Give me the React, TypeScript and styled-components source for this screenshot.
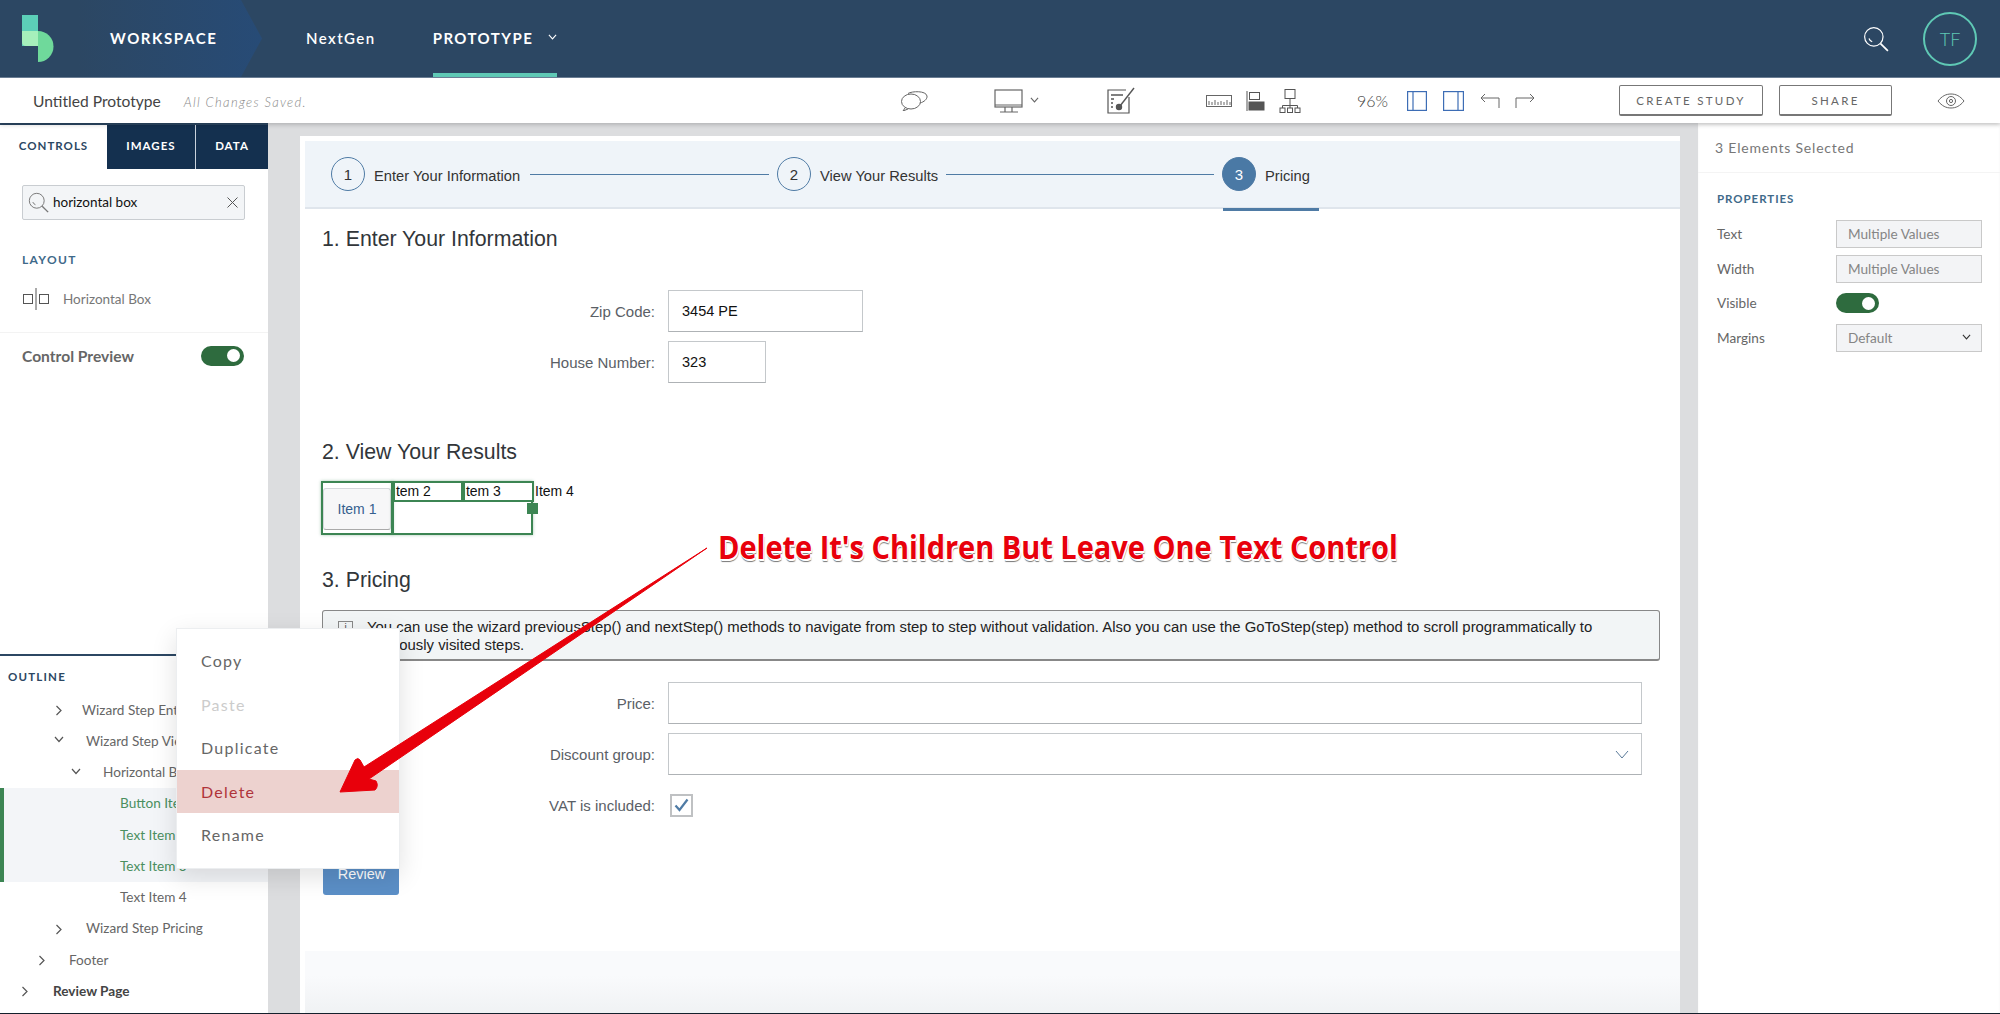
import React from 'react';
import styled, { createGlobalStyle } from 'styled-components';

const GlobalStyle = createGlobalStyle`
  html, body {
    margin: 0;
    padding: 0;
    background: #fff;
  }
  * {
    box-sizing: border-box;
  }
`;

const Page = styled.div`
  position: relative;
  width: 2000px;
  height: 1014px;
  overflow: hidden;
  display: flex;
  flex-direction: column;
  font-family: Lato, 'Liberation Sans', sans-serif;
  border-bottom: 1px solid #14202c;
`;

const Header = styled.header`
  height: 78px;
  flex: none;
  display: flex;
  align-items: center;
  background: #2c4763;
  color: #fff;
  border-bottom: 1px solid #6d8096;
`;

const Brand = styled.div`
  width: 262px;
  height: 77px;
  flex: none;
  display: flex;
  align-items: center;
  padding-left: 22px;
  background: linear-gradient(90deg, #2c4763 0%, #2c4763 30%, #274b76 100%);
  clip-path: polygon(0 0, 241px 0, 262px 50%, 241px 100%, 0 100%);
`;

const BrandName = styled.span`
  margin: 0 0 2px 56px;
  font-size: 15px;
  font-weight: 700;
  letter-spacing: 1.6px;
`;

const NavItem = styled.div<{ $active?: boolean; $gap: number }>`
  height: 77px;
  margin-left: ${(p) => p.$gap}px;
  display: flex;
  align-items: center;
  gap: 15px;
  font-size: 15px;
  font-weight: ${(p) => (p.$active ? 700 : 600)};
  letter-spacing: 1.45px;
  border-bottom: 4px solid ${(p) => (p.$active ? '#5fc9b5' : 'transparent')};
  padding-top: 2px;
`;

const HeaderRight = styled.div`
  margin-left: auto;
  margin-right: 23px;
  display: flex;
  align-items: center;
  gap: 34px;
`;

const Avatar = styled.div`
  width: 54px;
  height: 54px;
  border: 2px solid #5fc9b5;
  border-radius: 50%;
  display: flex;
  align-items: center;
  justify-content: center;
  color: #5fc9b5;
  font-size: 18px;
  font-weight: 300;
`;

const Toolbar = styled.div`
  height: 45px;
  flex: none;
  display: flex;
  align-items: center;
  background: #fff;
  color: #555;
  position: relative;
  z-index: 2;
  box-shadow: 0 2px 4px rgba(0, 0, 0, 0.18);
`;

const TitleGroup = styled.div`
  width: 900px;
  flex: none;
  padding-left: 33px;
  display: flex;
  align-items: baseline;
  gap: 23px;
`;

const DocTitle = styled.span`
  font-size: 15.6px;
  color: #444;
`;

const SavedNote = styled.span`
  font-size: 13px;
  font-style: italic;
  font-weight: 300;
  letter-spacing: 1.3px;
  color: #888;
`;

const Tool = styled.span<{ $gap?: number }>`
  margin-left: ${(p) => p.$gap ?? 0}px;
  display: flex;
  align-items: center;
  flex: none;
`;

const Zoom = styled(Tool)`
  width: 32px;
  font-size: 16px;
  font-weight: 300;
  color: #444;
`;

const OutlineButton = styled.button<{ $gap: number; $width: number }>`
  margin-left: ${(p) => p.$gap}px;
  width: ${(p) => p.$width}px;
  height: 31px;
  flex: none;
  background: #fff;
  border: 1px solid #777;
  border-bottom-width: 2px;
  border-radius: 2px;
  font-family: inherit;
  font-size: 11.5px;
  letter-spacing: 2.3px;
  color: #666;
  padding: 0;
`;

const Body = styled.div`
  flex: 1;
  min-height: 0;
  display: flex;
  background: #dcdddf;
`;

const LeftPanel = styled.aside`
  width: 268px;
  flex: none;
  display: flex;
  flex-direction: column;
  background: #fff;
  border-top: 2px solid #2c4763;
`;

const Tabs = styled.div`
  display: flex;
  height: 44px;
  flex: none;
`;

const Tab = styled.div<{ $active?: boolean; $width: number; $divided?: boolean }>`
  width: ${(p) => p.$width}px;
  display: flex;
  align-items: center;
  justify-content: center;
  background: ${(p) => (p.$active ? '#fff' : '#14304f')};
  color: ${(p) => (p.$active ? '#2c4763' : '#fff')};
  border-left: ${(p) => (p.$divided ? '1px solid #c9d2dc' : 'none')};
  font-size: 11.5px;
  font-weight: 700;
  letter-spacing: 1px;
  padding-bottom: 3px;
`;

const SearchBox = styled.div`
  margin: 16px 23px 0 22px;
  height: 35px;
  display: flex;
  align-items: center;
  padding: 0 6px 0 5px;
  gap: 4px;
  background: #f3f5f7;
  border: 1px solid #c9cdd1;
  border-radius: 2px;
  font-size: 13.5px;
  color: #111;
`;

const SearchText = styled.span`
  flex: 1;
  margin-top: -2px;
`;

const GroupLabel = styled.div`
  margin: 32px 0 0 22px;
  font-size: 12px;
  font-weight: 700;
  letter-spacing: 1.35px;
  color: #3f6a8a;
  line-height: 16px;
`;

const ControlRow = styled.div`
  margin: 20px 0 0 23px;
  height: 22px;
  display: flex;
  align-items: center;
  gap: 14px;
  font-size: 13.5px;
  color: #777;
`;

const PreviewRow = styled.div`
  margin-top: 22px;
  height: 46px;
  border-top: 1px solid #f3f3f3;
  padding: 0 24px 0 22px;
  display: flex;
  align-items: center;
  justify-content: space-between;
  font-size: 15.6px;
  font-weight: 700;
  color: #666;
`;

const Toggle = styled.div`
  width: 43px;
  height: 20px;
  border-radius: 10px;
  background: #2e6b3e;
  display: flex;
  align-items: center;
  justify-content: flex-end;
  padding-right: 4px;

  &::after {
    content: '';
    width: 13px;
    height: 13px;
    border-radius: 50%;
    background: #fff;
  }
`;

const Outline = styled.section`
  margin-top: auto;
  height: 359px;
  flex: none;
  border-top: 2px solid #2c4763;
`;

const OutlineTitle = styled.div`
  height: 38px;
  padding: 13px 0 0 8px;
  font-size: 11.5px;
  font-weight: 700;
  letter-spacing: 1.2px;
  color: #2c4763;
  line-height: 16px;
`;

const TreeRow = styled.div<{ $selected?: boolean; $chevronAt?: number; $textAt: number; $bold?: boolean }>`
  position: relative;
  height: 31.25px;
  display: flex;
  align-items: center;
  padding-left: ${(p) => p.$textAt}px;
  font-size: 13.6px;
  font-weight: ${(p) => (p.$bold ? 700 : 400)};
  color: ${(p) => (p.$selected ? '#4a8f5f' : p.$bold ? '#444' : '#666')};
  background: ${(p) => (p.$selected ? '#f3f5f8' : 'transparent')};
  box-shadow: ${(p) => (p.$selected ? 'inset 4px 0 0 #3c8553' : 'none')};

  svg {
    position: absolute;
    left: ${(p) => p.$chevronAt ?? 0}px;
    top: 11px;
  }
`;

const Workspace = styled.main`
  flex: 1;
  min-width: 0;
  padding: 13px 18px 0 32px;
  display: flex;
`;

const Canvas = styled.div`
  flex: 1;
  display: flex;
  flex-direction: column;
  padding-top: 5px;
  background: #fff;
  font-family: 'Liberation Sans', Arial, sans-serif;
  color: #222;
`;

const Stepper = styled.div`
  position: relative;
  height: 68px;
  flex: none;
  margin-left: 5px;
  display: flex;
  align-items: center;
  padding-left: 26px;
  background: #eff4f9;
  border-bottom: 2px solid #dfe5ec;
`;

const StepCircle = styled.span<{ $active?: boolean }>`
  width: 34px;
  height: 34px;
  flex: none;
  border-radius: 50%;
  border: 1px solid #4f7ba5;
  background: ${(p) => (p.$active ? '#4a79a5' : 'transparent')};
  color: ${(p) => (p.$active ? '#fff' : '#333')};
  display: flex;
  align-items: center;
  justify-content: center;
  font-size: 15px;
`;

const StepLabel = styled.span<{ $width: number }>`
  width: ${(p) => p.$width}px;
  margin: 3px 0 0 9px;
  font-size: 14.7px;
  color: #333;
  white-space: nowrap;
`;

const StepLine = styled.span<{ $width: number }>`
  width: ${(p) => p.$width}px;
  height: 1px;
  margin: 0 8px 0 9px;
  background: #4f7ba5;
  flex: none;
`;

const StepMark = styled.span`
  position: absolute;
  left: 918px;
  bottom: -4px;
  width: 96px;
  height: 3px;
  background: #4f7ba5;
`;

const Content = styled.div`
  flex: 1;
  min-height: 0;
  display: flex;
  flex-direction: column;
  padding-left: 22px;
`;

const Heading = styled.h2<{ $top: number }>`
  margin: ${(p) => p.$top}px 0 0;
  font-size: 21.3px;
  font-weight: 400;
  line-height: 30px;
  color: #32363a;
`;

const Form = styled.div<{ $top: number }>`
  margin-top: ${(p) => p.$top}px;
  display: grid;
  grid-template-columns: 333px 1fr;
  grid-auto-rows: 42px;
  column-gap: 13px;
  row-gap: 9px;
  align-items: center;
  padding-right: 38px;
`;

const Label = styled.label`
  text-align: right;
  font-size: 15px;
  color: #5a6066;
`;

const Field = styled.div<{ $width?: number }>`
  width: ${(p) => (p.$width ? `${p.$width}px` : '100%')};
  height: 42px;
  padding: 0 12px 0 13px;
  display: flex;
  align-items: center;
  justify-content: space-between;
  border: 1px solid #c4c8cb;
  border-bottom-color: #aeb2b5;
  background: #fff;
  font-size: 14.5px;
  color: #111;
`;

const ResultRow = styled.div`
  margin: 14px 0 0 -1px;
  display: flex;
  align-items: flex-start;
  font-size: 14px;
  color: #111;
  line-height: 18px;
`;

const SelectedItem = styled.div`
  width: 72px;
  height: 54px;
  flex: none;
  border: 2px solid #3c8553;
  box-shadow: 0 0 3px rgba(60, 133, 83, 0.45);
  display: flex;
  align-items: center;
  justify-content: center;
`;

const ItemButton = styled.div`
  width: 68px;
  height: 42px;
  margin-top: 1px;
  border: 1px solid #d5d8db;
  border-bottom-color: #aaa;
  border-radius: 3px;
  background: #f7f7f8;
  color: #35608f;
  font-size: 14px;
  display: flex;
  align-items: center;
  justify-content: center;
`;

const ItemStack = styled.div`
  position: relative;
  width: 141px;
  height: 54px;
  margin-left: -1px;
  flex: none;
  border: 2px solid #3c8553;
  box-shadow: 0 0 3px rgba(60, 133, 83, 0.45);
`;

const ItemCells = styled.div`
  display: flex;
  height: 19px;
  margin: -2px -2px 0;
`;

const ItemCell = styled.div<{ $width: number }>`
  width: ${(p) => p.$width}px;
  height: 21px;
  margin-right: -1px;
  border: 2px solid #3c8553;
  border-left-width: 3px;
  background: #fff;
  line-height: 17px;
  overflow: hidden;
  white-space: nowrap;
  text-indent: -3px;
`;

const ResizeHandle = styled.span`
  position: absolute;
  right: -7px;
  top: 20px;
  width: 11px;
  height: 11px;
  background: #3c8553;
`;

const LooseItem = styled.span`
  margin-left: 2px;
  line-height: 21px;
`;

const InfoBar = styled.div`
  margin: 15px 20px 0 0;
  height: 51px;
  flex: none;
  display: flex;
  padding: 7px 0 0 15px;
  gap: 14px;
  background: #f2f5f6;
  border: 1px solid #888;
  border-bottom-width: 2px;
  border-radius: 3px;
  font-size: 14.9px;
  line-height: 18px;
  color: #222;
`;

const InfoIcon = styled.span`
  width: 15px;
  height: 14px;
  margin-top: 3px;
  flex: none;
  border: 1px solid #888;
  display: flex;
  align-items: center;
  justify-content: center;
  font-size: 10px;
  line-height: 10px;
  color: #555;
`;

const Checkbox = styled.span`
  width: 23px;
  height: 23px;
  margin-left: 2px;
  border: 2px solid #bfc1c3;
  background: #fff;
  display: flex;
  align-items: center;
  justify-content: center;
`;

const ReviewButton = styled.button`
  width: 76px;
  height: 42px;
  margin: 27px 0 0 1px;
  flex: none;
  padding: 0 0 0 1px;
  background: #5b8fc7;
  color: #fff;
  border: none;
  border-radius: 3px;
  font-family: inherit;
  font-size: 14.5px;
`;

const FooterBand = styled.div`
  flex: 1;
  margin: 56px 0 0 -17px;
  background: linear-gradient(180deg, #f9fafc 0%, #f9fafc 40%, #f0f2f4 100%);
`;

const RightPanel = styled.aside`
  width: 302px;
  flex: none;
  background: #fff;
  box-shadow: inset 0 2px 3px rgba(0, 0, 0, 0.05);
`;

const SelectionTitle = styled.div`
  height: 50px;
  padding: 17px 0 0 17px;
  border-bottom: 1px solid #f4f4f4;
  font-size: 14px;
  line-height: 16px;
  letter-spacing: 0.8px;
  color: #777;
`;

const PropertiesTitle = styled.div`
  margin: 18px 0 0 19px;
  font-size: 11.5px;
  font-weight: 700;
  line-height: 16px;
  letter-spacing: 0.95px;
  color: #3f6a8a;
`;

const PropRows = styled.div`
  margin: 13px 18px 0 19px;
  display: grid;
  grid-template-columns: 119px 1fr;
  grid-auto-rows: 28px;
  row-gap: 6.5px;
  align-items: center;
  font-size: 13.6px;
  color: #666;
`;

const PropInput = styled.div`
  height: 28px;
  padding: 0 10px 0 11px;
  display: flex;
  align-items: center;
  justify-content: space-between;
  background: #f3f4f6;
  border: 1px solid #c9c9c9;
  font-size: 13.6px;
  color: #858585;
`;

const ContextMenu = styled.div`
  position: absolute;
  left: 176px;
  top: 628px;
  width: 224px;
  height: 241px;
  padding-top: 10px;
  background: #fff;
  border: 1px solid #eceef0;
  box-shadow: 0 8px 24px rgba(0, 0, 0, 0.12);
  z-index: 5;
`;

const MenuItem = styled.div<{ $tone?: 'muted' | 'danger' }>`
  height: 43.5px;
  padding-left: 24px;
  display: flex;
  align-items: center;
  font-size: 16px;
  letter-spacing: 1.25px;
  color: ${(p) => (p.$tone === 'muted' ? '#ccc' : p.$tone === 'danger' ? '#b0343a' : '#666')};
  background: ${(p) => (p.$tone === 'danger' ? '#edd2cf' : 'transparent')};
`;

const ArrowLayer = styled.svg`
  position: absolute;
  left: 0;
  top: 0;
  z-index: 6;
  pointer-events: none;
`;

const Annotation = styled.div`
  position: absolute;
  left: 718px;
  top: 524px;
  z-index: 6;
  font-family: 'Open Sans', 'Noto Sans', sans-serif;
  font-size: 32px;
  font-weight: 700;
  line-height: 46px;
  color: #e8000b;
  white-space: nowrap;
  transform: scaleX(0.905);
  transform-origin: left center;
  text-shadow: 1px 0 0 #fff, -1px 0 0 #fff, 0 -1px 0 #fff, 0 1px 0 #fff, 1px 2px 0 #fff, 1px 3px 1px #777;
`;

const ChevronRight = () => (
  <svg width="8" height="11" viewBox="0 0 8 11" fill="none" stroke="#555" strokeWidth="1.2">
    <path d="M1.5 1l4.5 4.5L1.5 10" />
  </svg>
);

const ChevronDown = ({ color = '#555', size = 10 }: { color?: string; size?: number }) => (
  <svg width={size} height={size * 0.7} viewBox="0 0 10 7" fill="none" stroke={color} strokeWidth="1.2">
    <path d="M1 1l4 4.5L9 1" />
  </svg>
);

const Logo = () => (
  <svg width="32" height="48" viewBox="0 0 32 48">
    <rect x="0" y="0" width="16" height="31" fill="#5ccfb8" />
    <path d="M16 16a15.5 15.5 0 0 1 0 31z" fill="#6fd99b" />
    <path d="M0 16h16v15H4a4 4 0 0 1-4-4z" fill="#a6efbb" />
  </svg>
);

const SearchGlyph = ({ size, color }: { size: number; color: string }) => (
  <svg width={size} height={size} viewBox="0 0 24 24" fill="none" stroke={color} strokeWidth="1.1">
    <circle cx="10" cy="10" r="8.5" />
    <path d="M16.2 16.2L23 23" strokeWidth="1.6" />
    <path d="M5.5 11.5a5 5 0 0 0 3 3" />
  </svg>
);

const steps = [
  { n: 1, label: 'Enter Your Information', width: 147, line: 239 },
  { n: 2, label: 'View Your Results', width: 117, line: 268 },
  { n: 3, label: 'Pricing', width: 50, active: true },
];

const outline = [
  { text: 'Wizard Step Entry', at: 82, chevron: 'right', chevronAt: 55 },
  { text: 'Wizard Step View', at: 86, chevron: 'down', chevronAt: 54 },
  { text: 'Horizontal Box', at: 103, chevron: 'down', chevronAt: 71 },
  { text: 'Button Item 1', at: 120, selected: true },
  { text: 'Text Item 2', at: 120, selected: true },
  { text: 'Text Item 3', at: 120, selected: true },
  { text: 'Text Item 4', at: 120 },
  { text: 'Wizard Step Pricing', at: 86, chevron: 'right', chevronAt: 55 },
  { text: 'Footer', at: 69, chevron: 'right', chevronAt: 38 },
  { text: 'Review Page', at: 53, chevron: 'right', chevronAt: 21, bold: true },
];

const App: React.FC = () => {
  return (
    <Page>
      <GlobalStyle />
      <Header>
        <Brand>
          <Logo />
          <BrandName>WORKSPACE</BrandName>
        </Brand>
        <NavItem $gap={44}>NextGen</NavItem>
        <NavItem $gap={57} $active>
          PROTOTYPE
          <ChevronDown color="#fff" size={9} />
        </NavItem>
        <HeaderRight>
          <SearchGlyph size={26} color="#fff" />
          <Avatar>TF</Avatar>
        </HeaderRight>
      </Header>

      <Toolbar>
        <TitleGroup>
          <DocTitle>Untitled Prototype</DocTitle>
          <SavedNote>All Changes Saved.</SavedNote>
        </TitleGroup>
        <Tool>
          <svg width="29" height="20" viewBox="0 0 29 20" fill="none" stroke="#666" strokeWidth="1">
            <ellipse cx="11" cy="10.5" rx="9.5" ry="7.5" />
            <path d="M8 2.5C12 0 26 -0.5 27 5c.5 3-3 6-7 7" />
            <path d="M5 17l-2 3 5-2" />
          </svg>
        </Tool>
        <Tool $gap={65}>
          <svg width="30" height="24" viewBox="0 0 30 24" fill="none" stroke="#666" strokeWidth="1.2">
            <rect x="1" y="1" width="27" height="17" />
            <path d="M1 16h27M11 18v5M18 18v5M6 23h18" />
          </svg>
        </Tool>
        <Tool $gap={6}>
          <ChevronDown color="#666" size={9} />
        </Tool>
        <Tool $gap={68}>
          <svg width="29" height="27" viewBox="0 0 29 27" fill="none" stroke="#555" strokeWidth="1.2">
            <path d="M22 10v16H1V3h18" />
            <path d="M4 8h12M4 12h3M4 16h2M4 20h2" strokeWidth="1.6" />
            <path d="M13 19L27 1" strokeWidth="1.4" />
            <circle cx="12" cy="20" r="2.6" fill="#555" />
          </svg>
        </Tool>
        <Tool $gap={70}>
          <svg width="26" height="12" viewBox="0 0 26 12" fill="none" stroke="#666" strokeWidth="1">
            <rect x="0.5" y="0.5" width="25" height="11" />
            <path d="M3 10V6M6 10V7M9 10V5M12 10V7M15 10V6M18 10V7M21 10V5M24 10V7" />
          </svg>
        </Tool>
        <Tool $gap={14}>
          <svg width="19" height="20" viewBox="0 0 19 20" fill="none" stroke="#555">
            <path d="M1 0v20" />
            <rect x="3.5" y="1.5" width="10" height="7" />
            <rect x="3" y="11" width="15" height="8" fill="#555" />
          </svg>
        </Tool>
        <Tool $gap={14}>
          <svg width="22" height="24" viewBox="0 0 22 24" fill="none" stroke="#555">
            <rect x="6" y="0.5" width="10" height="9" />
            <path d="M11 9.5V17M3.5 19v-2.5h15V19M11 17v2" />
            <rect x="1" y="19" width="5" height="4.5" />
            <rect x="8.5" y="19" width="5" height="4.5" />
            <rect x="16" y="19" width="5" height="4.5" />
          </svg>
        </Tool>
        <Zoom $gap={56}>96%</Zoom>
        <Tool $gap={18}>
          <svg width="20" height="20" viewBox="0 0 20 20" fill="none" stroke="#3d6db5" strokeWidth="1.2">
            <rect x="0.6" y="0.6" width="18.8" height="18.8" />
            <path d="M6 0.6v18.8" />
          </svg>
        </Tool>
        <Tool $gap={16}>
          <svg width="21" height="20" viewBox="0 0 21 20" fill="none" stroke="#3d6db5" strokeWidth="1.2">
            <rect x="0.6" y="0.6" width="19.8" height="18.8" />
            <path d="M15 0.6v18.8" />
          </svg>
        </Tool>
        <Tool $gap={16}>
          <svg width="20" height="15" viewBox="0 0 20 15" fill="none" stroke="#666">
            <path d="M19 15V5H1M5 1L1 5l4 4" />
          </svg>
        </Tool>
        <Tool $gap={15}>
          <svg width="20" height="15" viewBox="0 0 20 15" fill="none" stroke="#666">
            <path d="M1 15V5h18M15 1l4 4-4 4" />
          </svg>
        </Tool>
        <OutlineButton $gap={84} $width={144}>CREATE STUDY</OutlineButton>
        <OutlineButton $gap={16} $width={113}>SHARE</OutlineButton>
        <Tool $gap={45}>
          <svg width="28" height="16" viewBox="0 0 28 16" fill="none" stroke="#666">
            <path d="M1 8c4-5 8-7 13-7s9 2 13 7c-4 5-8 7-13 7S5 13 1 8z" />
            <circle cx="14" cy="8" r="4.5" />
            <circle cx="14" cy="8" r="1.6" />
          </svg>
        </Tool>
      </Toolbar>

      <Body>
        <LeftPanel>
          <Tabs>
            <Tab $active $width={107}>CONTROLS</Tab>
            <Tab $width={88}>IMAGES</Tab>
            <Tab $width={73} $divided>DATA</Tab>
          </Tabs>
          <SearchBox>
            <SearchGlyph size={21} color="#777" />
            <SearchText>horizontal box</SearchText>
            <svg width="11" height="11" viewBox="0 0 11 11" stroke="#555">
              <path d="M0.5 0.5l10 10M10.5 0.5l-10 10" />
            </svg>
          </SearchBox>
          <GroupLabel>LAYOUT</GroupLabel>
          <ControlRow>
            <svg width="26" height="22" viewBox="0 0 26 22" fill="none" stroke="#555">
              <rect x="0.5" y="6.5" width="9" height="9" />
              <rect x="16.5" y="6.5" width="9" height="9" />
              <path d="M13 0v22" />
            </svg>
            Horizontal Box
          </ControlRow>
          <PreviewRow>
            Control Preview
            <Toggle />
          </PreviewRow>
          <Outline>
            <OutlineTitle>OUTLINE</OutlineTitle>
            {outline.map((row) => (
              <TreeRow
                key={row.text}
                $textAt={row.at}
                $chevronAt={row.chevronAt}
                $selected={row.selected}
                $bold={row.bold}
              >
                {row.chevron === 'right' && <ChevronRight />}
                {row.chevron === 'down' && <ChevronDown />}
                {row.text}
              </TreeRow>
            ))}
          </Outline>
        </LeftPanel>

        <Workspace>
          <Canvas>
            <Stepper>
              {steps.map((step) => (
                <React.Fragment key={step.n}>
                  <StepCircle $active={step.active}>{step.n}</StepCircle>
                  <StepLabel $width={step.width}>{step.label}</StepLabel>
                  {step.line && <StepLine $width={step.line} />}
                </React.Fragment>
              ))}
              <StepMark />
            </Stepper>
            <Content>
              <Heading $top={15}>1. Enter Your Information</Heading>
              <Form $top={36}>
                <Label>Zip Code:</Label>
                <Field $width={195}>3454 PE</Field>
                <Label>House Number:</Label>
                <Field $width={98}>323</Field>
              </Form>
              <Heading $top={54}>2. View Your Results</Heading>
              <ResultRow>
                <SelectedItem>
                  <ItemButton>Item 1</ItemButton>
                </SelectedItem>
                <ItemStack>
                  <ItemCells>
                    <ItemCell $width={71}>Item 2</ItemCell>
                    <ItemCell $width={72}>Item 3</ItemCell>
                  </ItemCells>
                  <ResizeHandle />
                </ItemStack>
                <LooseItem>Item 4</LooseItem>
              </ResultRow>
              <Heading $top={30}>3. Pricing</Heading>
              <InfoBar>
                <InfoIcon>i</InfoIcon>
                <span>
                  You can use the wizard previousStep() and nextStep() methods to navigate from step to step without
                  validation. Also you can use the GoToStep(step) method to scroll programmatically to previously visited
                  steps.
                </span>
              </InfoBar>
              <Form $top={21}>
                <Label>Price:</Label>
                <Field />
                <Label>Discount group:</Label>
                <Field>
                  <span />
                  <svg width="14" height="9" viewBox="0 0 14 9" fill="none" stroke="#5a7a99">
                    <path d="M1 1l6 7 6-7" />
                  </svg>
                </Field>
                <Label>VAT is included:</Label>
                <Checkbox>
                  <svg width="15" height="14" viewBox="0 0 15 14" fill="none" stroke="#4f7ba5" strokeWidth="2.2">
                    <path d="M1.5 7.5l4 4.5L13.5 1.5" />
                  </svg>
                </Checkbox>
              </Form>
              <ReviewButton>Review</ReviewButton>
              <FooterBand />
            </Content>
          </Canvas>
        </Workspace>

        <RightPanel>
          <SelectionTitle>3 Elements Selected</SelectionTitle>
          <PropertiesTitle>PROPERTIES</PropertiesTitle>
          <PropRows>
            <span>Text</span>
            <PropInput>Multiple Values</PropInput>
            <span>Width</span>
            <PropInput>Multiple Values</PropInput>
            <span>Visible</span>
            <Toggle />
            <span>Margins</span>
            <PropInput>
              Default
              <ChevronDown color="#333" size={9} />
            </PropInput>
          </PropRows>
        </RightPanel>
      </Body>

      <ContextMenu>
        <MenuItem>Copy</MenuItem>
        <MenuItem $tone="muted">Paste</MenuItem>
        <MenuItem>Duplicate</MenuItem>
        <MenuItem $tone="danger">Delete</MenuItem>
        <MenuItem>Rename</MenuItem>
      </ContextMenu>

      <Annotation>Delete It's Children But Leave One Text Control</Annotation>
      <ArrowLayer width="2000" height="1014" viewBox="0 0 2000 1014">
        <path
          d="M707 548L369 779L376 781Q379 786 375 790L340 792L355 760Q358 757 360 760L364 767Z"
          fill="#e8000b"
          stroke="#e8000b"
          strokeWidth="1"
        />
      </ArrowLayer>
    </Page>
  );
};

export default App;
